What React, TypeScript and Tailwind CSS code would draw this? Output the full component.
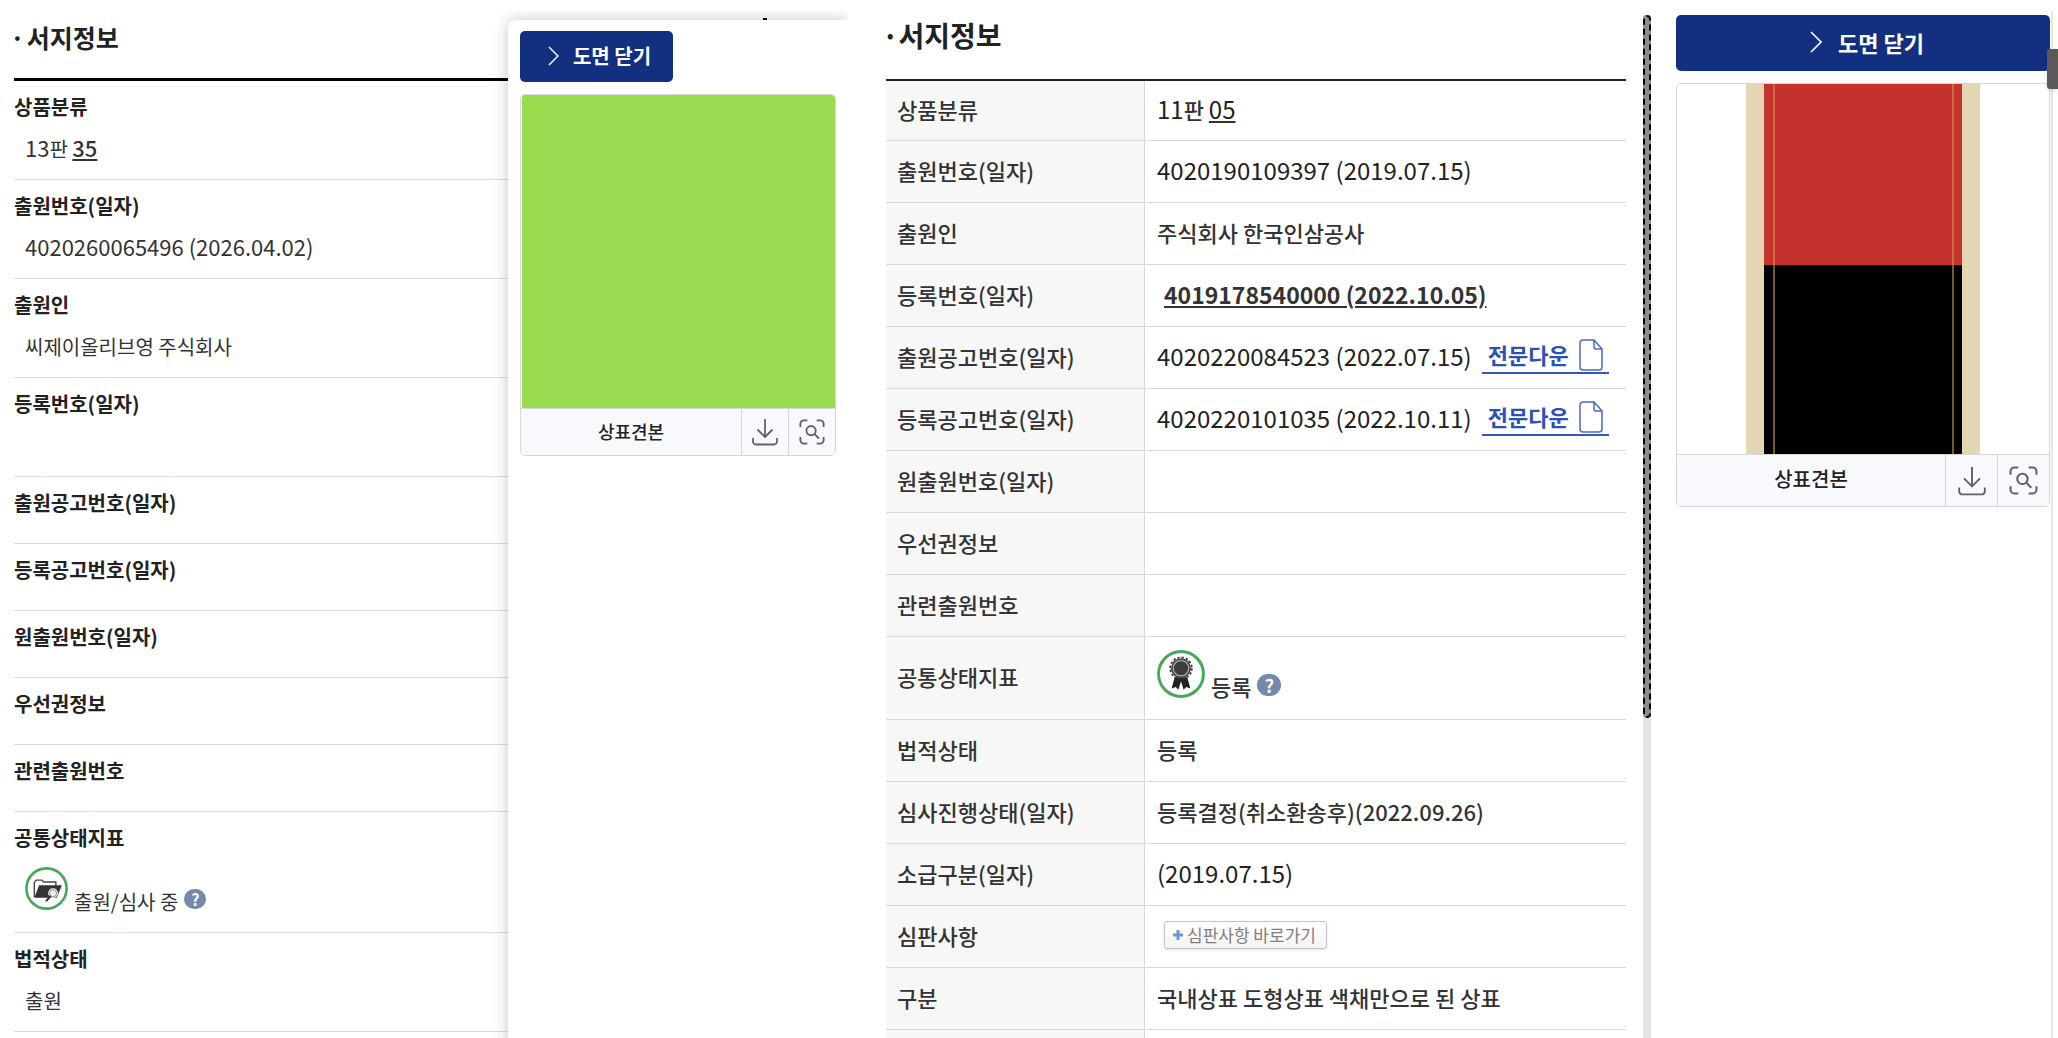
import type { ReactNode } from "react";

type Status = "review" | "registered";

const Num = ({ children, big = false }: { children: ReactNode; big?: boolean }) => (
  <span className={big ? "text-[24px] leading-none font-normal text-[#222]" : "text-[22px] leading-none"}>{children}</span>
);

const Chevron = ({ className }: { className: string }) => (
  <svg viewBox="0 0 12 22" className={className} fill="none" stroke="currentColor" strokeWidth="1.6" aria-hidden="true">
    <path d="M1 1l10 10L1 21" />
  </svg>
);

const DownloadIcon = ({ className }: { className: string }) => (
  <svg viewBox="0 0 26 28" className={className} fill="none" stroke="#606368" strokeWidth="1.8" strokeLinejoin="round" aria-hidden="true">
    <path d="M13 1v18M5.5 11.5L13 19l7.500-7.500M1 20v3.500a3 3 0 0 0 3 3h18a3 3 0 0 0 3-3V20" />
  </svg>
);

const ScanIcon = ({ className }: { className: string }) => (
  <svg viewBox="0 0 28 28" className={className} fill="none" stroke="#606368" strokeWidth="2" aria-hidden="true">
    <path d="M1.500 8.500V5A3.500 3.500 0 0 1 5 1.500h4M19 1.500h4A3.500 3.500 0 0 1 26.500 5v3.500M26.500 19.500V23a3.500 3.500 0 0 1-3.500 3.500h-4M9 26.500H5A3.500 3.500 0 0 1 1.500 23v-3.500" />
    <circle cx="13" cy="12.500" r="5" />
    <path d="M16.500 16l5 5" />
  </svg>
);

const FileIcon = () => (
  <svg viewBox="0 0 24 32" className="h-8 w-6" fill="none" stroke="#4a68c4" strokeWidth="1.500" strokeLinejoin="round" aria-hidden="true">
    <path d="M15 1H4a3 3 0 0 0-3 3v24a3 3 0 0 0 3 3h16a3 3 0 0 0 3-3V10zM15 1v7a2 2 0 0 0 2 2h6" />
  </svg>
);

const StatusIcon = ({ kind, className }: { kind: Status; className: string }) => (
  <svg viewBox="0 0 46 46" className={className} aria-hidden="true">
    <circle cx="23" cy="23" r="21.500" fill="#fff" stroke="#45a85b" strokeWidth="2.800" />
    {kind === "review" ? (
      <g>
        <path d="M10 32V16.500l2-2.500h6l2 2h13v4" fill="#fff" stroke="#444" strokeWidth="1.500" />
        <path d="M10 33l5-13.500h24.500L34 33z" fill="#333" />
        <path d="M28 32.500l-4.500 4.500" stroke="#fff" strokeWidth="4.500" />
        <circle cx="30" cy="28" r="5.200" fill="#fff" />
        <circle cx="30" cy="28" r="3.800" fill="#eee" stroke="#888" />
        <path d="M27 31.500l-4 4.500" stroke="#333" strokeWidth="2.200" strokeLinecap="round" />
      </g>
    ) : (
      <g>
        <path d="M17 26l-3 11 4-1.500 2.500 2.500L23 30l2.500 8 2.500-2.500 4 1.500-3-11z" fill="#222" />
        <circle cx="23" cy="17.500" r="10.400" fill="none" stroke="#333" strokeWidth="1.600" strokeDasharray="2.300 1.800" />
        <circle cx="23" cy="17.500" r="9.600" fill="#444" />
        <circle cx="23" cy="17.500" r="7.400" fill="#3c3c3c" stroke="#aaa" strokeWidth="1.200" />
      </g>
    )}
  </svg>
);

const Help = ({ className }: { className: string }) => (
  <button type="button" aria-label="도움말" className={`flex items-center justify-center rounded-full bg-[#7489ad] font-bold text-white ${className}`}>
    ?
  </button>
);

const Publication = ({ children }: { children: string }) => (
  <span className="flex items-center gap-2.5">
    <Num big>{children}</Num>
    <a href="#doc" className="flex items-center gap-2.5 border-b-2 border-[#3557bd] px-1.5 font-bold text-[#2d50b8]">
      <span className="pb-0.5">전문다운</span>
      <FileIcon />
    </a>
  </span>
);

const leftRows: { label: string; value?: ReactNode }[] = [
  { label: "상품분류", value: <><Num>13</Num>판 <a href="#class" className="font-medium underline underline-offset-2"><Num>35</Num></a></> },
  { label: "출원번호(일자)", value: <Num>4020260065496 (2026.04.02)</Num> },
  { label: "출원인", value: "씨제이올리브영 주식회사" },
  { label: "등록번호(일자)", value: "" },
  { label: "출원공고번호(일자)" },
  { label: "등록공고번호(일자)" },
  { label: "원출원번호(일자)" },
  { label: "우선권정보" },
  { label: "관련출원번호" },
  {
    label: "공통상태지표",
    value: (
      <span className="flex h-[52px] items-start pt-0.5">
        <StatusIcon kind="review" className="h-[43px] w-[43px]" />
        <span className="ml-1.5 pt-5">출원/심사 중</span>
        <Help className="mt-[22px] ml-1.5 h-5 w-[22px] text-base" />
      </span>
    ),
  },
  { label: "법적상태", value: "출원" },
];

const rightRows: { label: string; value?: ReactNode; height?: string }[] = [
  { label: "상품분류", height: "h-[60px]", value: <><Num big>11</Num>판 <a href="#class" className="underline underline-offset-2"><Num big>05</Num></a></> },
  { label: "출원번호(일자)", value: <Num big>4020190109397 (2019.07.15)</Num> },
  { label: "출원인", value: "주식회사 한국인삼공사" },
  { label: "등록번호(일자)", value: <a href="#reg" className="ml-[7px] text-[23px] leading-none font-bold underline underline-offset-2">4019178540000 (2022.10.05)</a> },
  { label: "출원공고번호(일자)", value: <Publication>4020220084523 (2022.07.15)</Publication> },
  { label: "등록공고번호(일자)", value: <Publication>4020220101035 (2022.10.11)</Publication> },
  { label: "원출원번호(일자)" },
  { label: "우선권정보" },
  { label: "관련출원번호" },
  {
    label: "공통상태지표",
    height: "h-[83px]",
    value: (
      <span className="flex h-[60px] items-start">
        <StatusIcon kind="registered" className="mt-1 h-12 w-12" />
        <span className="ml-1.5 pt-6">등록</span>
        <Help className="mt-7 ml-1.5 h-[22px] w-6 text-lg" />
      </span>
    ),
  },
  { label: "법적상태", value: "등록" },
  { label: "심사진행상태(일자)", value: "등록결정(취소환송후)(2022.09.26)" },
  { label: "소급구분(일자)", value: <Num big>(2019.07.15)</Num> },
  {
    label: "심판사항",
    value: (
      <button type="button" className="ml-[7px] flex h-7 items-center gap-1 rounded-[3px] border border-[#c4c4c4] bg-linear-to-b from-white to-[#f3f3f3] px-2.5 pl-2 text-[17px] font-normal text-[#808080] shadow-sm">
        <svg viewBox="0 0 10 10" className="h-2.5 w-2.5" stroke="#6b95d6" strokeWidth="3" aria-hidden="true">
          <path d="M5 0v10M0 5h10" />
        </svg>
        심판사항 바로가기
      </button>
    ),
  },
  { label: "구분", value: "국내상표 도형상표 색채만으로 된 상표" },
  { label: "" },
];

export default function App() {
  return (
    <div className="grid h-screen grid-cols-[848fr_1210fr] overflow-hidden bg-white font-['Noto_Sans_CJK_KR',sans-serif] text-[#333]">
      <main className="relative mt-[11px] mb-0.5 grid grid-cols-[508fr_340fr] overflow-hidden">
        <section className="pl-3.5 text-[20px] leading-[30px]">
          <h2 className="flex h-[70px] items-start gap-0.5 border-b-3 border-black pt-[11px] text-[25px] font-bold text-[#222]">
            <span className="-ml-1">·</span>서지정보
          </h2>
          <dl>
            {leftRows.map(({ label, value }) => (
              <div key={label} className="border-b border-[#dcdcdc] pt-[11px]">
                <dt className="font-bold text-[#222]">{label}</dt>
                <dd className={value === undefined ? "h-[25px]" : "mt-3 min-h-[45px] pb-[15px] pl-[11px]"}>{value}</dd>
              </div>
            ))}
          </dl>
        </section>
        <span className="absolute top-[7px] left-[90%] h-1 w-1 bg-black" aria-hidden="true" />
        <aside className="relative mt-[9px] rounded-tl-lg bg-white px-3 pt-[11px] shadow-[0_0_16px_rgba(0,0,0,0.22)]">
          <button type="button" className="flex h-[51px] w-[153px] items-center justify-center gap-3.5 rounded-[5px] bg-[#12307f] pb-0.5 pl-1.5 text-[20px] font-bold text-white">
            <Chevron className="h-5 w-[11px]" />
            도면 닫기
          </button>
          <figure className="mt-3 overflow-hidden rounded-[5px] border border-[#d5d7db]">
            <div className="ml-px h-[313px] bg-[#99dc50]" />
            <figcaption className="flex h-[47px] items-stretch border-t border-[#d5d7db] bg-[#f8f9fd] text-[18px] font-medium text-[#222]">
              <span className="flex flex-1 items-center justify-center pb-0.5">상표견본</span>
              <button type="button" aria-label="다운로드" className="flex w-[47px] items-center justify-center border-l border-[#d5d7db]">
                <DownloadIcon className="h-7 w-[26px]" />
              </button>
              <button type="button" aria-label="확대" className="flex w-[47px] items-center justify-center border-l border-[#d5d7db]">
                <ScanIcon className="h-[26px] w-[26px]" />
              </button>
            </figcaption>
          </figure>
        </aside>
      </main>

      <main className="flex min-w-0 pl-[38px]">
        <section className="flex-[740] text-[22px] leading-8">
          <h2 className="flex h-[81px] items-start border-b-2 border-[#222] pt-[19px] text-[28px] font-bold text-[#222]">
            <span className="-ml-1">·</span>서지정보
          </h2>
          <table className="w-full table-fixed border-separate border-spacing-0">
            <colgroup>
              <col className="w-[35%]" />
              <col />
            </colgroup>
            <tbody>
              {rightRows.map(({ label, value, height }) => (
                <tr key={label} className={height ?? "h-[62px]"}>
                  <th scope="row" className="border-r border-b border-[#d8d8d8] bg-[#f7f7f7] p-0 pb-1 pl-[11px] text-left font-medium">{label}</th>
                  <td className="border-b border-[#d8d8d8] p-0 pb-1 pl-3 font-medium">{value}</td>
                </tr>
              ))}
            </tbody>
          </table>
        </section>
        <div className="mt-[15px] ml-[17px] w-2 shrink-0 bg-[#e4e4e4]">
          <div className="h-[703px] rounded-sm border-2 border-dashed border-black bg-[#8c8c8c]" />
        </div>
        <aside className="relative mt-[11px] mr-[5px] ml-[25px] flex-[374] border-r-2 border-[#e6e6e6] pt-1 pr-px">
          <button type="button" className="flex h-14 w-full items-center justify-center gap-4 rounded-[5px] bg-[#12307f] pb-0.5 pl-2 text-[22px] font-bold text-white">
            <Chevron className="h-[22px] w-3" />
            도면 닫기
          </button>
          <figure className="mt-3 overflow-hidden rounded-[5px] border border-[#d5d7db]">
            <svg viewBox="0 0 372 370" className="block h-[370px] w-full" role="img" aria-label="상표견본" shapeRendering="crispEdges">
              <rect x="69" width="234" height="370" fill="#e4d5b3" />
              <rect x="87" width="198" height="181" fill="#c5312c" />
              <rect x="87" y="181" width="198" height="189" fill="#000" />
              <path d="M97 0v181M276 0v181" stroke="#ca6b38" strokeWidth="2" />
              <path d="M97 181v189M276 181v189" stroke="#745a31" strokeWidth="2" />
            </svg>
            <figcaption className="flex h-[52px] items-stretch border-t border-[#d5d7db] bg-[#f8f9fd] text-[20px] font-medium text-[#222]">
              <span className="flex flex-1 items-center justify-center pb-1">상표견본</span>
              <button type="button" aria-label="다운로드" className="flex w-[52px] items-center justify-center border-l border-[#d5d7db]">
                <DownloadIcon className="h-[30px] w-7" />
              </button>
              <button type="button" aria-label="확대" className="flex w-[52px] items-center justify-center border-l border-[#d5d7db]">
                <ScanIcon className="h-[29px] w-[29px]" />
              </button>
            </figcaption>
          </figure>
          <div className="absolute top-[38px] -right-[7px] h-10 w-[11px] rounded-l-[3px] bg-[#5c5858] shadow-md" />
        </aside>
      </main>
    </div>
  );
}
